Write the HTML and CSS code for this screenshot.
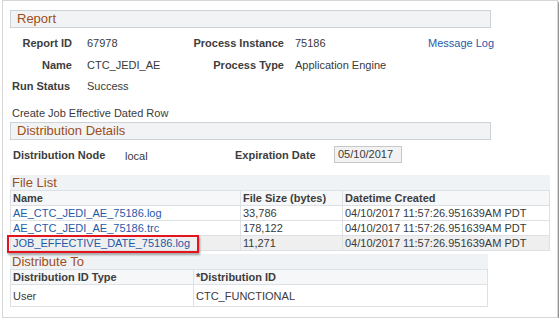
FILE: index.html
```html
<!doctype html>
<html lang="en">
  <head>
    <meta charset="UTF-8" />
    <title>Report Detail</title>
    <link rel="stylesheet" href="styles.css">
  </head>
  <body>
    <div class="frame">
      <div class="bar">Report</div>

      <div class="report-grid">
        <span class="label">Report ID</span>
        <span>67978</span>
        <span class="label">Process Instance</span>
        <span>75186</span>
        <a class="link" href="#">Message Log</a>

        <span class="label">Name</span>
        <span>CTC_JEDI_AE</span>
        <span class="label">Process Type</span>
        <span>Application Engine</span>
        <span></span>

        <span class="label">Run Status</span>
        <span>Success</span>
      </div>

      <div class="desc">Create Job Effective Dated Row</div>

      <div class="bar">Distribution Details</div>

      <div class="dist-row">
        <span class="label node">Distribution Node</span>
        <span class="node-val">local</span>
        <span class="label exp">Expiration Date</span>
        <span class="date-box">05/10/2017</span>
      </div>

      <div class="group files">
        <div class="group-title">File List</div>
        <table class="grid">
          <colgroup>
            <col style="width: 230px" />
            <col style="width: 102px" />
            <col />
          </colgroup>
          <tr class="head">
            <th>Name</th>
            <th>File Size (bytes)</th>
            <th>Datetime Created</th>
          </tr>
          <tr>
            <td><a class="link" href="#">AE_CTC_JEDI_AE_75186.log</a></td>
            <td>33,786</td>
            <td>04/10/2017 11:57:26.951639AM PDT</td>
          </tr>
          <tr>
            <td><a class="link" href="#">AE_CTC_JEDI_AE_75186.trc</a></td>
            <td>178,122</td>
            <td>04/10/2017 11:57:26.951639AM PDT</td>
          </tr>
          <tr class="picked">
            <td class="marked">
              <a class="link" href="#">JOB_EFFECTIVE_DATE_75186.log</a>
              <span class="highlight"></span>
            </td>
            <td>11,271</td>
            <td>04/10/2017 11:57:26.951639AM PDT</td>
          </tr>
        </table>
      </div>

      <div class="group dest">
        <div class="group-title">Distribute To</div>
        <table class="grid">
          <colgroup>
            <col style="width: 183px" />
            <col />
          </colgroup>
          <tr class="head">
            <th>Distribution ID Type</th>
            <th>*Distribution ID</th>
          </tr>
          <tr class="tall">
            <td>User</td>
            <td>CTC_FUNCTIONAL</td>
          </tr>
        </table>
      </div>
    </div>
  </body>
</html>
```

FILE: styles.css
```css
body {
  margin: 0;
  font-family: "Liberation Sans", Arial, sans-serif;
  font-size: 11px;
  color: #3a3a3a;
  background: #fff;
}
.frame {
  box-sizing: border-box;
  width: 556px;
  height: 318px;
  margin-left: 2px;
  padding: 9px 0 0 7px;
  border: 1px solid #d6d6d6;
  box-shadow: 2px 2px 2px rgba(0, 0, 0, 0.45);
  background: #fff;
}
.bar {
  box-sizing: border-box;
  width: 481px;
  height: 18px;
  padding-left: 6px;
  background: #f1f3f4;
  border: 1px solid #cdd2d6;
  color: #9d4e1b;
  font-size: 13px;
  line-height: 16px;
}
.label {
  font-weight: bold;
  color: #3d3d3d;
}
.link {
  color: #1f5aa8;
  text-decoration: none;
}
.report-grid {
  display: grid;
  grid-template-columns: 62px 117px 95px 144px auto;
  grid-auto-rows: 14px;
  row-gap: 7.5px;
  margin-top: 8px;
  line-height: 14px;
}
.report-grid .label {
  text-align: right;
}
.report-grid span:nth-child(2),
.report-grid span:nth-child(7),
.report-grid span:nth-child(12) {
  padding-left: 15px;
}
.report-grid span:nth-child(4),
.report-grid span:nth-child(9) {
  padding-left: 11px;
}
.report-grid .label:nth-child(11) {
  text-align: left;
  padding-left: 2px;
  white-space: nowrap;
}
.desc {
  margin-top: 13px;
  padding-left: 2px;
  line-height: 14px;
}
.desc + .bar {
  margin-top: 2px;
}
.dist-row {
  display: flex;
  align-items: center;
  height: 17px;
  margin-top: 6px;
  padding-left: 3px;
}
.node {
  width: 112px;
}
.node-val {
  width: 110px;
  padding-top: 2px;
}
.exp {
  width: 99px;
}
.date-box {
  box-sizing: border-box;
  width: 68px;
  height: 17px;
  padding-left: 3px;
  background: #f2f2f2;
  border: 1px solid #c8c8c8;
  line-height: 15px;
}
.group {
  background: #f0f3f5;
}
.files {
  width: 540px;
  margin-top: 12px;
}
.dest {
  width: 478px;
  margin-top: 3px;
}
.group-title {
  height: 15px;
  padding-left: 2px;
  color: #9d4e1b;
  font-size: 13px;
  line-height: 15px;
}
.grid {
  width: 100%;
  border-collapse: collapse;
  table-layout: fixed;
}
.grid th,
.grid td {
  height: 14px;
  padding: 0 2px;
  border: 1px solid #dde1e4;
  text-align: left;
  white-space: nowrap;
  line-height: 14px;
}
.grid th {
  font-weight: bold;
  color: #3d3d3d;
  background: #f6f7f8;
}
.grid td {
  background: #fff;
}
.grid .picked td {
  background: #efefef;
}
.grid .tall td {
  height: 21px;
}
.marked {
  position: relative;
}
.highlight {
  position: absolute;
  left: -4px;
  top: -1px;
  width: 188px;
  height: 14px;
  border: 2px solid #e3141b;
  box-shadow: 1px 2px 2px rgba(0, 0, 0, 0.35);
}
```
